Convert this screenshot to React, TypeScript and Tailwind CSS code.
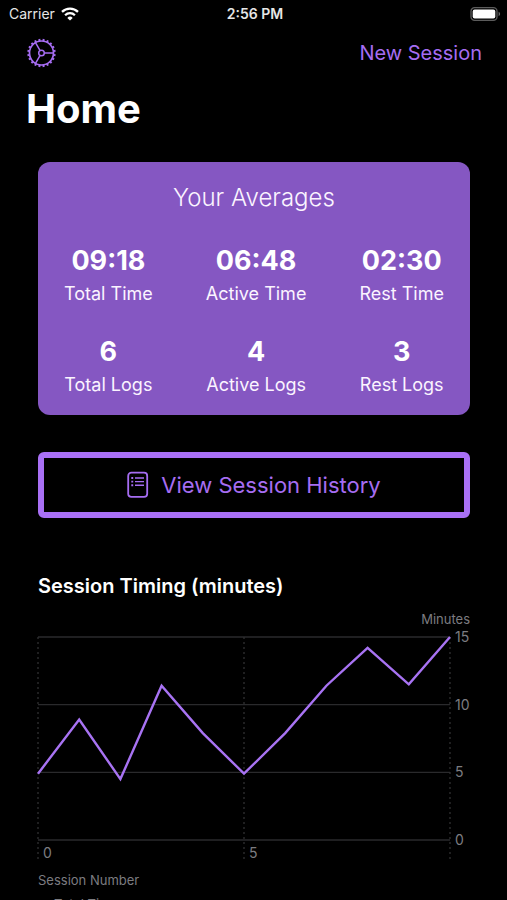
type Stat = { value: string; label: string };

const stats: Stat[] = [
  { value: "09:18", label: "Total Time" },
  { value: "06:48", label: "Active Time" },
  { value: "02:30", label: "Rest Time" },
  { value: "6", label: "Total Logs" },
  { value: "4", label: "Active Logs" },
  { value: "3", label: "Rest Logs" },
];

const minutes = [4.9, 8.9, 4.5, 11.4, 7.9, 4.9, 7.9, 11.4, 14.2, 11.5, 15];
const MAX_MINUTES = 15;
const PLOT_WIDTH = 412;
const PLOT_HEIGHT = 203;
const TICK_DROP = 19;

function WifiIcon() {
  return (
    <svg viewBox="0 0 18 14" className="h-[14px] w-[18px]" fill="none" stroke="#fff" strokeWidth="2.3" aria-hidden="true">
      <path d="M1 4.9a11.4 11.4 0 0 1 16 0" />
      <path d="M4.1 8.2a7 7 0 0 1 9.8 0" />
      <path d="M9 13.6 6.3 10.9a3.9 3.9 0 0 1 5.4 0z" fill="#fff" stroke="none" />
    </svg>
  );
}

function BatteryIcon() {
  return (
    <svg viewBox="0 0 31 14" className="h-[14px] w-[31px]" aria-hidden="true">
      <rect x="1" y="0.7" width="26" height="12.6" rx="3.6" fill="none" stroke="#5c5c5c" strokeWidth="1.3" />
      <rect x="2.7" y="2.4" width="22.6" height="9.2" rx="2" fill="#fff" />
      <path d="M28.6 4.8v4.4c.9-.4 1.5-1.2 1.5-2.2s-.6-1.8-1.5-2.2z" fill="#6b6b6b" />
    </svg>
  );
}

function GearIcon() {
  const teeth = Array.from({ length: 20 }, (_, i) => i * 18 + 9);
  return (
    <svg viewBox="0 0 30 30" className="h-[30px] w-[30px]" fill="none" stroke="#a66df2" strokeWidth="1.5" aria-hidden="true">
      <circle cx="15.5" cy="15" r="12" strokeWidth="1.7" />
      <circle cx="15.5" cy="15" r="2.8" />
      <path d="M18.3 15h9.2M14.1 12.6 9.5 4.6M14.1 17.4l-4.6 8" />
      {teeth.map((angle) => (
        <path key={angle} d="M15.5 .8v2.2" strokeWidth="2" transform={`rotate(${angle} 15.5 15)`} />
      ))}
    </svg>
  );
}

function ListIcon() {
  return (
    <svg viewBox="0 0 22 28" className="h-7 w-[22px]" fill="none" stroke="#a66df2" aria-hidden="true">
      <rect x="1.2" y="1.7" width="19" height="24.2" rx="3.2" strokeWidth="1.8" />
      <path d="M8 7h9M8 10.6h9M8 14.2h9" strokeWidth="1.4" />
      <path d="M4.3 7h1.9M4.3 10.6h1.9M4.3 14.2h1.9" strokeWidth="1.9" />
    </svg>
  );
}

function TimingChart() {
  const points = minutes
    .map((m, i) => `${(i * PLOT_WIDTH) / (minutes.length - 1)},${PLOT_HEIGHT - (m / MAX_MINUTES) * PLOT_HEIGHT}`)
    .join(" ");
  const rows = [0, 1, 2, 3].map((i) => (i * PLOT_HEIGHT) / 3);
  const columns = [0, PLOT_WIDTH / 2, PLOT_WIDTH];
  return (
    <div className="flex">
      <div className="min-w-0 flex-1">
        <svg
          viewBox={`0 0 ${PLOT_WIDTH} ${PLOT_HEIGHT}`}
          preserveAspectRatio="none"
          className="block h-[203px] w-full overflow-visible"
          fill="none"
          role="img"
          aria-label="Session length in minutes by session number"
        >
          {rows.map((y) => (
            <path key={y} d={`M0 ${y}H${PLOT_WIDTH}`} stroke="#2a2a2c" strokeWidth="1.4" vectorEffect="non-scaling-stroke" />
          ))}
          {columns.map((x) => (
            <path
              key={x}
              d={`M${x} 0V${PLOT_HEIGHT + TICK_DROP}`}
              stroke="#303032"
              strokeWidth="1.3"
              strokeDasharray="2 3"
              vectorEffect="non-scaling-stroke"
            />
          ))}
          <polyline points={points} stroke="#a873f3" strokeWidth="2.4" vectorEffect="non-scaling-stroke" />
        </svg>
        <div className="mt-1 grid grid-cols-2 text-sm leading-[18px]">
          <span className="pl-[5px]">0</span>
          <span className="pl-[5px]">5</span>
        </div>
      </div>
      <div className="-mt-[9px] flex h-[221px] w-5 flex-col justify-between pl-[5px] text-sm leading-[18px]">
        <span>15</span>
        <span>10</span>
        <span>5</span>
        <span>0</span>
      </div>
    </div>
  );
}

export default function App() {
  return (
    <div className="flex h-screen flex-col overflow-hidden bg-black font-['Inter','Liberation_Sans',sans-serif] text-white">
      <div className="grid h-7 shrink-0 grid-cols-3 items-center pl-[9px] pr-[6px] text-sm text-[#e6e6e6]">
        <div className="flex items-center gap-1.5">
          <span>Carrier</span>
          <WifiIcon />
        </div>
        <span className="text-center font-semibold">2:56 PM</span>
        <div className="flex justify-end">
          <BatteryIcon />
        </div>
      </div>

      <header className="shrink-0 pl-[26px] pr-[25px]">
        <div className="flex h-[50px] items-center justify-between">
          <button type="button" aria-label="Settings">
            <GearIcon />
          </button>
          <button type="button" className="text-xl text-[#a66df2]">
            New Session
          </button>
        </div>
        <h1 className="mt-[7px] text-[40px] font-bold leading-[48px]">Home</h1>
      </header>

      <main className="mt-[29px] pl-[38px] pr-[37px]">
        <section className="rounded-xl bg-[#8557c2] px-[26px] pb-[18px] pt-5">
          <h2 className="text-center text-2xl font-light leading-8 text-[#fbf4ff]">Your Averages</h2>
          <dl className="mt-[31px] grid grid-cols-[auto_auto_auto] justify-between gap-y-[30px]">
            {stats.map((s) => (
              <div key={s.label} className="flex flex-col-reverse text-center">
                <dt className="text-lg leading-6 text-[#fbf4ff]">{s.label}</dt>
                <dd className="mb-[5px] text-[27px] font-bold leading-8">{s.value}</dd>
              </div>
            ))}
          </dl>
        </section>

        <button
          type="button"
          className="mt-[37px] flex h-[66px] w-full items-center justify-center gap-3 rounded-md border-[6px] border-[#a970f5] text-[22px] text-[#a66df2]"
        >
          <ListIcon />
          View Session History
        </button>

        <section className="mt-[54px] text-[#7c7c80]">
          <h2 className="text-xl font-semibold leading-7 text-white">Session Timing (minutes)</h2>
          <p className="mt-[10px] text-right text-[13px] leading-[18px]">Minutes</p>
          <div className="mt-[9px]">
            <TimingChart />
          </div>
          <p className="mt-[9px] text-[13px] leading-[18px]">Session Number</p>
          <p className="mt-[6px] pl-4 text-[13px] leading-[18px]">Total Time</p>
        </section>
      </main>
    </div>
  );
}
